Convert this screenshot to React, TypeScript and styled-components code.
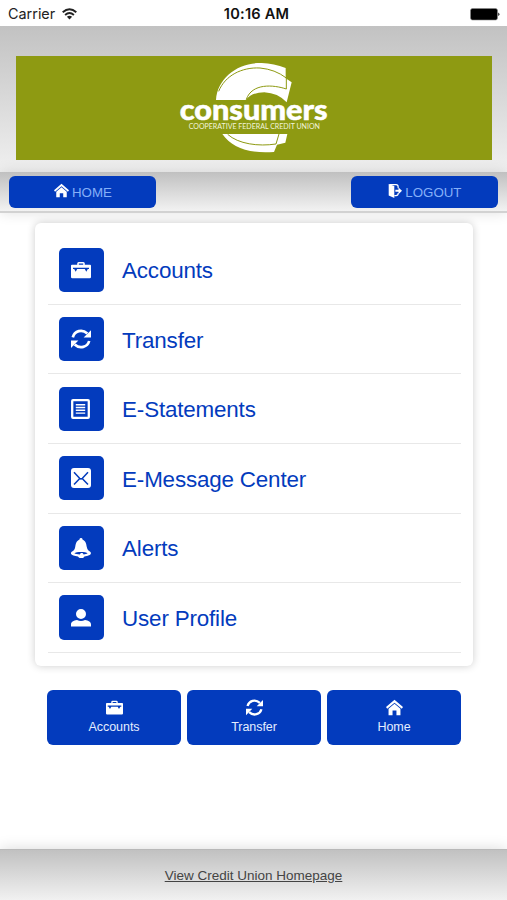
import React from 'react';
import styled, { createGlobalStyle } from 'styled-components';

const BLUE = '#033bbd';

const GlobalStyle = createGlobalStyle`
  * { box-sizing: border-box; }
  body { margin: 0; background: #fff; font-family: "Liberation Sans", Arial, sans-serif; }
`;

const Screen = styled.div`
  display: flex;
  flex-direction: column;
  width: 507px;
  height: 900px;
  overflow: hidden;
  background: #fff;
`;

const StatusBar = styled.div`
  display: grid;
  grid-template-columns: 1fr auto 1fr;
  align-items: center;
  flex: none;
  height: 26px;
  padding: 2px 7px 0 8px;
  font: 14.4px/20px Inter, sans-serif;
  color: #222;
`;

const Carrier = styled.span`
  display: flex;
  align-items: center;
  gap: 7px;
`;

const Clock = styled.span`
  padding-left: 5px;
  font-size: 14.6px;
  font-weight: 600;
  letter-spacing: 0.2px;
  color: #111;
`;

const BatteryIcon = styled.svg`
  justify-self: end;
`;

const Header = styled.header`
  flex: none;
  height: 146px;
  padding: 30px 15px 0 15.5px;
  background: linear-gradient(#c2c2c2, #f0f0f0);
`;

const Banner = styled.div`
  height: 104px;
  background: #8e9a12;
`;

const Logo = styled.svg`
  display: block;
  margin-left: 154.5px;
`;

const NavBar = styled.nav`
  display: flex;
  justify-content: space-between;
  flex: none;
  height: 41px;
  padding: 4.3px 8.6px 0 9.4px;
  border-bottom: 2px solid #d2d2d2;
  background: linear-gradient(#c0c0c0, #f2f2f2);
  box-shadow: 0 0 14px rgba(0, 0, 0, 0.12);
`;

const NavButton = styled.button`
  display: flex;
  align-items: center;
  justify-content: center;
  gap: 3px;
  width: 147px;
  height: 32px;
  padding: 0;
  border: 0;
  border-radius: 6px;
  background: ${BLUE};
  color: #86b0f8;
  font: 13.3px "Liberation Sans", sans-serif;

  svg { color: #fff; margin-top: -3px; }
`;

const Card = styled.main`
  flex: none;
  width: 438px;
  height: 443px;
  margin: 10px 0 0 35px;
  padding: 12.3px 12.5px 0 13px;
  border-radius: 6px;
  background: #fff;
  box-shadow: 0 0 9px rgba(0, 0, 0, 0.2);
`;

const MenuRow = styled.div`
  display: flex;
  align-items: center;
  gap: 18.5px;
  height: 69.6px;
  padding-left: 11.4px;
  border-bottom: 1.5px solid #e8e8e8;
  color: ${BLUE};
  font-size: 22.4px;
  letter-spacing: -0.17px;
`;

const IconTile = styled.span`
  display: flex;
  align-items: center;
  justify-content: center;
  width: 44.2px;
  height: 44.2px;
  border-radius: 5px;
  background: ${BLUE};
  color: #fff;
`;

const MenuLabel = styled.span`
  padding-top: 3px;
`;

const Shortcuts = styled.div`
  display: grid;
  grid-template-columns: repeat(3, 133.5px);
  gap: 6.5px;
  flex: none;
  margin: 24px 0 0 47.3px;
`;

const Shortcut = styled.button`
  display: flex;
  flex-direction: column;
  align-items: center;
  height: 55px;
  padding: 9px 0 0;
  border: 0;
  border-radius: 6px;
  background: ${BLUE};
  color: #fff;
  font: 12.5px/15px "Liberation Sans", sans-serif;
  letter-spacing: -0.05px;

  span { margin-top: 4px; color: #e4edff; }
`;

const Footer = styled.footer`
  flex: none;
  height: 51px;
  margin-top: auto;
  padding-top: 18px;
  border-top: 1px solid #b8b8b8;
  background: linear-gradient(#c1c1c1, #f1f1f1);
  box-shadow: 0 0 14px rgba(0, 0, 0, 0.15);
  text-align: center;
  font-size: 13.5px;
  line-height: 15px;
`;

const FooterLink = styled.a`
  color: #444;
  text-decoration: underline;
`;

type IconName = 'case' | 'sync' | 'list' | 'mail' | 'bell' | 'user' | 'home' | 'exit';

const glyphs: Record<IconName, React.ReactNode> = {
  case: (
    <>
      <path fill="currentColor" fillRule="evenodd" d="M1 4.7h5.2V3.5Q6.2 2 7.7 2h4.6q1.5 0 1.5 1.5v1.2H19q1 0 1 1V17q0 1.3-1.3 1.3H1.3Q0 18.300 0 17V5.700q0-1 1-1ZM7.800 4.700h4.400V3.500H7.800Z" />
      <path fill={BLUE} d="M2 7.700h16v1.300h-1.200l-1.500 2.700-1.500-2.700H6.200l-1.500 2.700-1.500-2.700H2Z" />
    </>
  ),
  sync: (
    <>
      <path fill="none" stroke="currentColor" strokeWidth="2.7" d="M1.800 8.300C3.500 2 11 -.5 16.300 4.500M18.200 12C16.500 18 9 20.500 3.700 15.500" />
      <path fill="currentColor" d="M20 1.200v7.400h-7.400ZM0 19v-7.400h7.400Z" />
    </>
  ),
  list: (
    <>
      <rect x="1.200" y="1.200" width="16.600" height="17.600" rx=".8" fill="none" stroke="currentColor" strokeWidth="2.300" />
      <path fill="none" stroke="currentColor" strokeWidth="1.400" d="M4.800 5.700h9.400M4.800 8.500h9.400M4.800 11.300h9.400M4.800 14.100h9.400" />
    </>
  ),
  mail: (
    <>
      <rect width="20" height="20" rx="3" fill="currentColor" />
      <path fill="none" stroke={BLUE} strokeWidth="1.5" d="m3 4.200 5.600 6q1.400 1.400 2.800 0l5.600-6M3 16.500l5.800-6M17 16.500l-5.800-6" />
    </>
  ),
  bell: (
    <>
      <path fill="currentColor" d="M8.500 1.400Q8.500 0 10 0t1.500 1.400C15 3 15.200 6 15.800 9c.4 2.200 1.400 3.400 3.100 4.600 3 2.300-1 4.400-5.600 4.800-.4 2.300-5.400 2.200-6.300 0C1.500 18-2.200 15.700 1.100 13.600 3 12.400 3.800 11.200 4.200 9 4.800 6 5 3 8.500 1.400Z" />
      <path fill={BLUE} d="M3.400 15.300c1.800-1.700 11.400-1.700 13.200 0-.8.700-2.500 1.100-4 1.200-.3-1.800-2.700-2.300-3.800-.1-2.200-.1-4.400-.3-5.400-1.100Z" />
    </>
  ),
  user: (
    <path fill="currentColor" d="M10 1a5 5 0 1 1 0 10 5 5 0 0 1 0-10ZM0 18.500v-2c0-3 2.500-4 6-4.600q4 2.200 8 0c3.500.6 6 1.600 6 4.600v2Z" />
  ),
  home: (
    <path fill="currentColor" d="M10 1 20 9.500l-1.400 2L10 4.300 1.400 11.500 0 9.500ZM10 5.600l7 5.900V19h-4.700v-5.500H7.700V19H3v-7.500Z" />
  ),
  exit: (
    <>
      <path fill="currentColor" d="m1 0 8 3v17l-8-3.500Z" />
      <path fill="none" stroke="currentColor" strokeWidth="1.700" d="M2 1h9.500q3 0 3 3v2M14.500 13v1q0 2.500-3 2.500H9" />
      <path fill="currentColor" d="M10.500 8.300H15V5l5 4.800-5 4.700v-3.300h-4.500Z" />
    </>
  ),
};

const Icon = ({ name, size = 20 }: { name: IconName; size?: number }) => (
  <svg width={size} height={size} viewBox="0 0 20 20" aria-hidden="true">{glyphs[name]}</svg>
);

const menu: { icon: IconName; label: string }[] = [
  { icon: 'case', label: 'Accounts' },
  { icon: 'sync', label: 'Transfer' },
  { icon: 'list', label: 'E-Statements' },
  { icon: 'mail', label: 'E-Message Center' },
  { icon: 'bell', label: 'Alerts' },
  { icon: 'user', label: 'User Profile' },
];

const shortcuts: { icon: IconName; label: string }[] = [
  { icon: 'case', label: 'Accounts' },
  { icon: 'sync', label: 'Transfer' },
  { icon: 'home', label: 'Home' },
];

const ConsumersLogo = () => (
  <Logo width="170" height="104" viewBox="0 6 510 312">
    <path fill="#fff" d="M138 138C143 70 205 25 275 27Q312 28 347 42V73L365 85 350 145Q324 117 283 115 245 115 227 138Z" />
    <path fill="none" stroke="#8e9a12" strokeWidth="3" d="M146 112C165 65 215 39 270 42Q315 46 349 72V105C310 92 246 87 229 136" />
    <path fill="#fff" d="M157 240H352L346 266 321 272 312 294C235 300 185 280 157 240Z" />
    <path fill="none" stroke="#8e9a12" strokeWidth="3" d="M173 241C205 270 265 278 318 270L327 240" />
    <text x="29" y="197" fill="#fff" stroke="#fff" strokeWidth="1.500" fontFamily="Lato, sans-serif" fontWeight="900" fontSize="84" textLength="444" lengthAdjust="spacingAndGlyphs">consumers</text>
    <text x="56" y="225" fill="#f2f4dc" fontFamily="Lato, sans-serif" fontSize="20" textLength="394" lengthAdjust="spacingAndGlyphs">COOPERATIVE FEDERAL CREDIT UNION</text>
  </Logo>
);

export default function App() {
  return (
    <>
      <GlobalStyle />
      <Screen>
        <StatusBar>
          <Carrier>
            Carrier
            <svg width="15" height="12" viewBox="0 0 15 12">
              <path fill="none" stroke="#222" strokeWidth="1.900" d="M.7 4.300q6.800-6 13.600 0M3.100 7q4.400-3.800 8.800 0" />
              <path fill="#222" d="m7.500 11.500-2.600-2.700q2.600-2 5.200 0Z" />
            </svg>
          </Carrier>
          <Clock>10:16 AM</Clock>
          <BatteryIcon width="30" height="13" viewBox="0 0 30 13">
            <rect x=".5" y=".5" width="27" height="11.500" rx="2" fill="#000" stroke="#888" strokeWidth=".6" />
            <path d="M28.300 4.500q2.200 1.700 0 3.500Z" />
          </BatteryIcon>
        </StatusBar>
        <Header>
          <Banner><ConsumersLogo /></Banner>
        </Header>
        <NavBar>
          <NavButton><Icon name="home" size={15} />HOME</NavButton>
          <NavButton><Icon name="exit" size={14} />LOGOUT</NavButton>
        </NavBar>
        <Card>
          {menu.map((item) => (
            <MenuRow key={item.label}>
              <IconTile><Icon name={item.icon} /></IconTile>
              <MenuLabel>{item.label}</MenuLabel>
            </MenuRow>
          ))}
        </Card>
        <Shortcuts>
          {shortcuts.map((item) => (
            <Shortcut key={item.label}>
              <Icon name={item.icon} size={17} />
              <span>{item.label}</span>
            </Shortcut>
          ))}
        </Shortcuts>
        <Footer><FooterLink>View Credit Union Homepage</FooterLink></Footer>
      </Screen>
    </>
  );
}
